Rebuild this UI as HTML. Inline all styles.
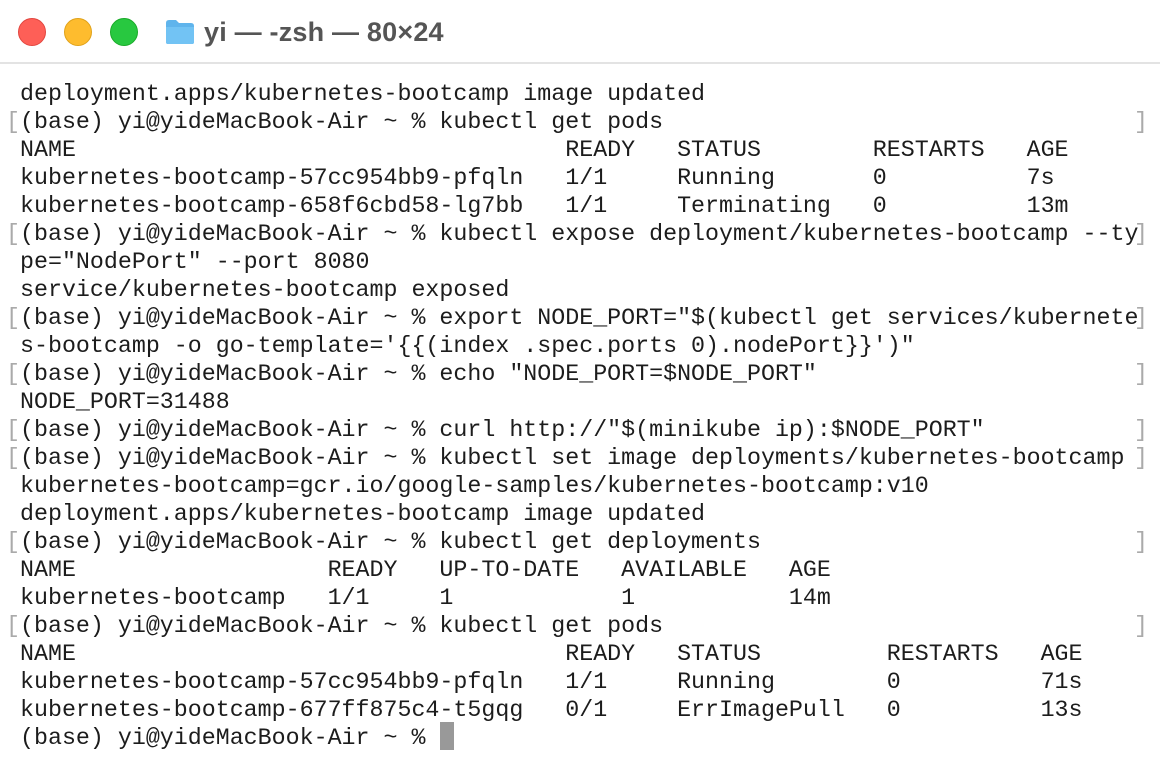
<!DOCTYPE html>
<html><head><meta charset="utf-8"><style>
html,body{margin:0;padding:0;background:#fff;width:1160px;height:770px;overflow:hidden}
.tb{position:absolute;left:0;top:0;width:1160px;height:62px;background:#fff;border-bottom:2px solid #e3e3e3}
.dot{position:absolute;top:18px;width:28px;height:28px;border-radius:50%}
.title{position:absolute;left:204px;top:17px;font:bold 27px "Liberation Sans",sans-serif;color:#555;letter-spacing:0.2px}
pre{position:absolute;left:20px;top:80px;margin:0;font:23.3px/28px "Liberation Mono",monospace;color:#1c1c1c}
.b{position:absolute;font:23.3px/28px "Liberation Mono",monospace;color:#aaa}
.cur{position:absolute;left:440px;top:722px;width:14px;height:28px;background:#999}
</style></head><body>
<div class="tb">
<div class="dot" style="left:18px;background:#fe5f57;border:1px solid #e2463f;box-sizing:border-box"></div>
<div class="dot" style="left:64px;background:#febc2e;border:1px solid #e0a21a;box-sizing:border-box"></div>
<div class="dot" style="left:110px;background:#28c840;border:1px solid #1aab29;box-sizing:border-box"></div>
<svg style="position:absolute;left:165px;top:19px" width="30" height="26" viewBox="0 0 30 26"><path d="M1 4 Q1 1 4 1 H11 L14 4 H26 Q29 4 29 7 V23 Q29 25 27 25 H3 Q1 25 1 23 Z" fill="#5fb4ec"/><path d="M1 8 H29 V23 Q29 25 27 25 H3 Q1 25 1 23 Z" fill="#72c3f4"/></svg>
<div class="title">yi — -zsh — 80×24</div>
</div>
<pre>deployment.apps/kubernetes-bootcamp image updated
(base) yi@yideMacBook-Air ~ % kubectl get pods
NAME                                   READY   STATUS        RESTARTS   AGE
kubernetes-bootcamp-57cc954bb9-pfqln   1/1     Running       0          7s
kubernetes-bootcamp-658f6cbd58-lg7bb   1/1     Terminating   0          13m
(base) yi@yideMacBook-Air ~ % kubectl expose deployment/kubernetes-bootcamp --ty
pe="NodePort" --port 8080
service/kubernetes-bootcamp exposed
(base) yi@yideMacBook-Air ~ % export NODE_PORT="$(kubectl get services/kubernete
s-bootcamp -o go-template='{{(index .spec.ports 0).nodePort}}')"
(base) yi@yideMacBook-Air ~ % echo "NODE_PORT=$NODE_PORT"
NODE_PORT=31488
(base) yi@yideMacBook-Air ~ % curl http://"$(minikube ip):$NODE_PORT"
(base) yi@yideMacBook-Air ~ % kubectl set image deployments/kubernetes-bootcamp
kubernetes-bootcamp=gcr.io/google-samples/kubernetes-bootcamp:v10
deployment.apps/kubernetes-bootcamp image updated
(base) yi@yideMacBook-Air ~ % kubectl get deployments
NAME                  READY   UP-TO-DATE   AVAILABLE   AGE
kubernetes-bootcamp   1/1     1            1           14m
(base) yi@yideMacBook-Air ~ % kubectl get pods
NAME                                   READY   STATUS         RESTARTS   AGE
kubernetes-bootcamp-57cc954bb9-pfqln   1/1     Running        0          71s
kubernetes-bootcamp-677ff875c4-t5gqg   0/1     ErrImagePull   0          13s
(base) yi@yideMacBook-Air ~ %</pre>
<div class="b" style="left:6px;top:108px">[</div><div class="b" style="left:1134px;top:108px">]</div>
<div class="b" style="left:6px;top:220px">[</div><div class="b" style="left:1134px;top:220px">]</div>
<div class="b" style="left:6px;top:304px">[</div><div class="b" style="left:1134px;top:304px">]</div>
<div class="b" style="left:6px;top:360px">[</div><div class="b" style="left:1134px;top:360px">]</div>
<div class="b" style="left:6px;top:416px">[</div><div class="b" style="left:1134px;top:416px">]</div>
<div class="b" style="left:6px;top:444px">[</div><div class="b" style="left:1134px;top:444px">]</div>
<div class="b" style="left:6px;top:528px">[</div><div class="b" style="left:1134px;top:528px">]</div>
<div class="b" style="left:6px;top:612px">[</div><div class="b" style="left:1134px;top:612px">]</div>
<div class="cur"></div>
</body></html>
